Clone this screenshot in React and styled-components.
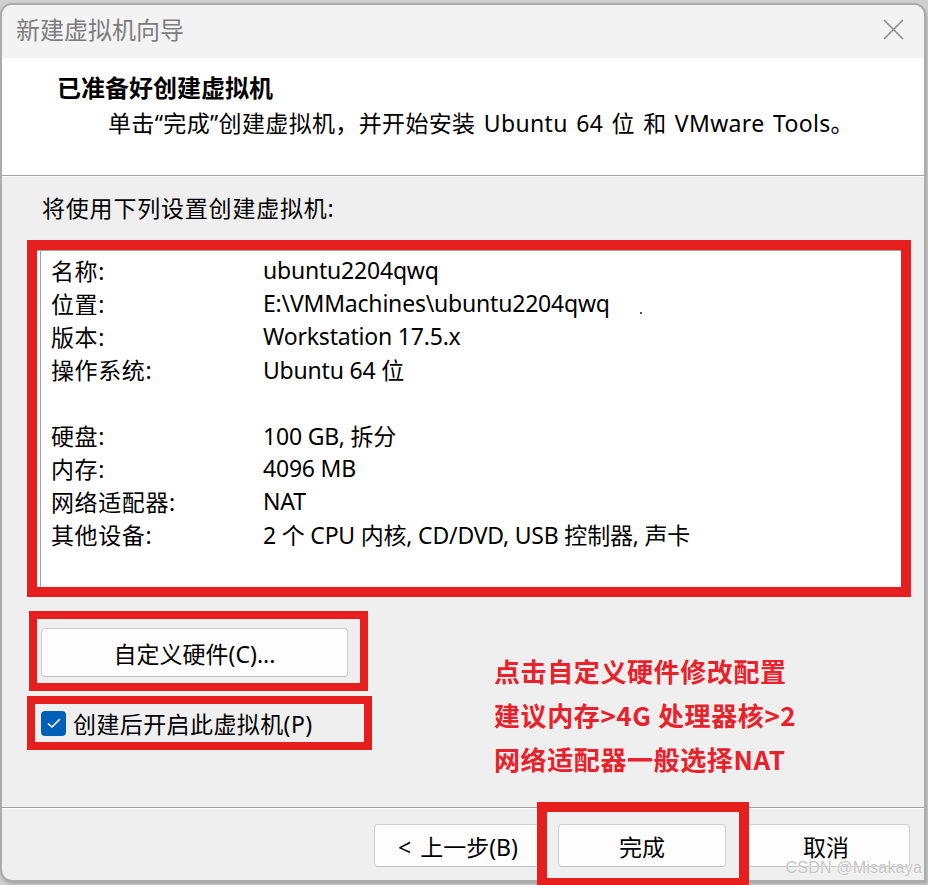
import React from "react";
import styled, { createGlobalStyle } from "styled-components";

const GlobalStyle = createGlobalStyle`
  html, body {
    margin: 0;
    padding: 0;
    background: #cfcfcf;
  }
  body {
    font-family: "Noto Sans", "Noto Sans CJK SC", sans-serif;
    color: #000;
  }
`;

const Page = styled.div`
  width: 928px;
  height: 885px;
  overflow: hidden;
  padding-top: 3px;
  box-sizing: border-box;
`;

const Dialog = styled.div`
  position: relative;
  width: 926px;
  height: 879px;
  box-sizing: border-box;
  border: 2px solid #ababab;
  border-radius: 12px 12px 0 12px;
  background: #efefef;
  display: flex;
  flex-direction: column;
  box-shadow: 1px 2px 3px rgba(0, 0, 0, 0.2);
`;

const TitleBar = styled.div`
  height: 53px;
  flex: none;
  display: flex;
  align-items: flex-start;
  justify-content: space-between;
  padding: 8px 20px 0 14px;
  box-sizing: border-box;
  background: #f3f3f3;
  border-radius: 10px 10px 0 0;
`;

const Title = styled.div`
  font-size: 24px;
  line-height: 32px;
  color: #7d7d7d;
  font-family: "Noto Sans CJK SC", sans-serif;
`;

const CloseButton = styled.div`
  width: 21px;
  height: 21px;
  margin-top: 6px;
  display: flex;
  svg {
    display: block;
  }
`;

const Header = styled.div`
  height: 118px;
  flex: none;
  background: #fff;
  border-bottom: 1px solid #a3a3a3;
  box-sizing: border-box;
  padding: 11px 0 0 55px;
`;

const HeaderTitle = styled.div`
  font-family: "Noto Sans CJK SC", sans-serif;
  font-weight: 700;
  font-size: 24px;
  line-height: 36px;
`;

const HeaderText = styled.div`
  font-size: 23px;
  line-height: 36px;
  margin-left: 51px;
  letter-spacing: 0.35px;
  word-spacing: 2px;
`;

const Body = styled.div`
  flex: 1;
  padding: 15px 0 0 25px;
  border-top: 1px solid #fafafa;
`;

const Lead = styled.div`
  font-size: 23px;
  line-height: 33px;
  padding-left: 15px;
  margin-bottom: 15px;
  letter-spacing: 0.8px;
`;

const RedFrame = styled.div`
  border: ${(p) => p.$thick || 10}px solid #e61e1e;
  box-sizing: border-box;
  width: ${(p) => p.$w}px;
  height: ${(p) => p.$h}px;
`;

const ListBox = styled.div`
  height: 100%;
  background: #fff;
  box-shadow: inset 3px 0 0 #fff, inset 4px 0 0 #a0a0a0;
  border-top: 1px solid #a0a0a0;
  box-sizing: border-box;
  padding: 2px 0 0 14px;
`;

const Row = styled.div`
  display: grid;
  grid-template-columns: 212px 1fr;
  height: 33px;
  align-items: center;
  font-size: 23px;
  white-space: nowrap;
`;

const Label = styled.span`
  color: #000;
  letter-spacing: 0.6px;
`;

const Value = styled.span`
  color: #000;
  letter-spacing: -0.2px;
`;

const Dot = styled.span`
  display: inline-block;
  width: 2px;
  height: 2px;
  background: #555;
  margin-left: 30px;
  vertical-align: -2px;
`;

const Lower = styled.div`
  display: flex;
  margin-top: 14px;
`;

const LeftCol = styled.div`
  display: flex;
  flex-direction: column;
  gap: 5px;
`;

const HwFrame = styled(RedFrame)`
  padding: 9px 11px 6px 4px;
  margin-left: 2px;
`;

const Button = styled.button`
  width: ${(p) => p.$w || 168}px;
  height: ${(p) => p.$h || 43}px;
  background: #fdfdfd;
  border: 1px solid #d0d0d0;
  border-bottom-color: #c2c2c2;
  border-radius: 4px;
  font-family: "Noto Sans", "Noto Sans CJK SC", sans-serif;
  font-size: 23px;
  color: #000;
  padding: 0;
  cursor: default;
  display: flex;
  align-items: center;
  justify-content: center;
  box-sizing: border-box;
  word-spacing: 3px;
`;

const CheckFrame = styled(RedFrame)`
  display: flex;
  align-items: center;
  padding-left: 6px;
  gap: 7px;
`;

const CheckBox = styled.span`
  width: 25px;
  height: 25px;
  border-radius: 4px;
  background: #005fb8;
  display: flex;
  align-items: center;
  justify-content: center;
  flex: none;
`;

const CheckText = styled.span`
  font-size: 23px;
  letter-spacing: 0.4px;
`;

const Note = styled.div`
  margin: 38px 0 0 122px;
  font-family: "Noto Sans CJK SC", sans-serif;
  font-weight: 700;
  font-size: 26px;
  line-height: 44px;
  color: #e8212b;
  letter-spacing: 0.6px;
  white-space: nowrap;
`;

const Footer = styled.div`
  height: 73px;
  flex: none;
  border-top: 1px solid #a3a3a3;
  box-shadow: inset 0 1px 0 #fff;
  display: flex;
  justify-content: flex-end;
  align-items: flex-start;
  padding: 16px 14px 0 0;
  gap: 16px;
  box-sizing: border-box;
`;

const Marked = styled.div`
  position: relative;
  &::after {
    content: "";
    position: absolute;
    left: -21px;
    right: -23px;
    top: -22px;
    bottom: -21px;
    border: 10px solid #e61e1e;
    pointer-events: none;
  }
`;

const Watermark = styled.div`
  position: absolute;
  right: 2px;
  bottom: 3px;
  font-family: "Liberation Sans", Arial, sans-serif;
  font-size: 16px;
  color: #c4c4c4;
  text-shadow: 0 0 1px #fff, 0 0 1px #fff;
  letter-spacing: 0.2px;
`;

const settings = [
  ["名称:", "ubuntu2204qwq"],
  ["位置:", "E:\\VMMachines\\ubuntu2204qwq", true],
  ["版本:", "Workstation 17.5.x"],
  ["操作系统:", "Ubuntu 64 位"],
  ["", ""],
  ["硬盘:", "100 GB, 拆分"],
  ["内存:", "4096 MB"],
  ["网络适配器:", "NAT"],
  ["其他设备:", "2 个 CPU 内核, CD/DVD, USB 控制器, 声卡"],
];

const App = () => {
  return (
    <Page>
      <GlobalStyle />
      <Dialog>
        <TitleBar>
          <Title>新建虚拟机向导</Title>
          <CloseButton>
            <svg width="21" height="21" viewBox="0 0 21 21">
              <path d="M1 1 L20 20 M20 1 L1 20" stroke="#8c8c8c" strokeWidth="1.6" />
            </svg>
          </CloseButton>
        </TitleBar>
        <Header>
          <HeaderTitle>已准备好创建虚拟机</HeaderTitle>
          <HeaderText>
            单击“完成”创建虚拟机，并开始安装 Ubuntu 64 位 和 VMware Tools。
          </HeaderText>
        </Header>
        <Body>
          <Lead>将使用下列设置创建虚拟机:</Lead>
          <RedFrame $w={884} $h={357}>
            <ListBox>
              {settings.map(([k, v, dot], i) => (
                <Row key={i}>
                  <Label>{k}</Label>
                  <Value>
                    {v}
                    {dot && <Dot />}
                  </Value>
                </Row>
              ))}
            </ListBox>
          </RedFrame>
          <Lower>
            <LeftCol>
              <HwFrame $w={339} $h={80} $thick={8}>
                <Button $w={307} $h={49}>自定义硬件(C)...</Button>
              </HwFrame>
              <CheckFrame $w={345} $h={54} $thick={8}>
                <CheckBox>
                  <svg width="16" height="12" viewBox="0 0 16 12">
                    <path d="M2 6.5 L6 10 L14 2" stroke="#fff" strokeWidth="1.6" fill="none" />
                  </svg>
                </CheckBox>
                <CheckText>创建后开启此虚拟机(P)</CheckText>
              </CheckFrame>
            </LeftCol>
            <Note>
              <div>点击自定义硬件修改配置</div>
              <div>建议内存&gt;4G 处理器核&gt;2</div>
              <div>网络适配器一般选择NAT</div>
            </Note>
          </Lower>
        </Body>
        <Footer>
          <Button>&lt; 上一步(B)</Button>
          <Marked>
            <Button>完成</Button>
          </Marked>
          <Button>取消</Button>
        </Footer>
        <Watermark>CSDN @Misakaya</Watermark>
      </Dialog>
    </Page>
  );
};

export default App;
